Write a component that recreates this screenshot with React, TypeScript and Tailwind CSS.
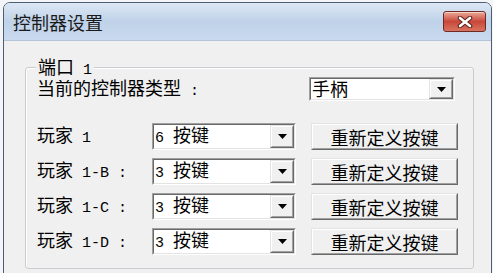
import React from 'react'

const cjk = "font-['Noto_Sans_CJK_SC','Noto_Sans',sans-serif] text-[18px] leading-[18px]"
const mono = "font-['Liberation_Mono','Noto_Sans_CJK_SC',monospace] text-[15px] leading-[18px]"

// SimSun-ish look: CJK at full width, ASCII at half width
function Mixed({ text }: { text: string }) {
  const parts = text.split(/([\x20-\x7e]+)/).filter(Boolean)
  return (
    <span className="whitespace-pre leading-[18px] text-black">
      {parts.map((p, i) =>
        /^[\x20-\x7e]+$/.test(p) ? (
          <span key={i} className={mono}>
            {p}
          </span>
        ) : (
          <span key={i} className={cjk}>
            {p}
          </span>
        ),
      )}
    </span>
  )
}

function Raised({ className = '', children }: { className?: string; children?: React.ReactNode }) {
  return (
    <div
      className={`border border-t-[#e3e3e3] border-l-[#e3e3e3] border-b-[#696969] border-r-[#696969] ${className}`}
    >
      <div className="flex h-full w-full items-center justify-center border border-t-white border-l-white border-b-[#a0a0a0] border-r-[#a0a0a0] bg-[#f0f0f0] leading-[18px]">
        {children}
      </div>
    </div>
  )
}

function Combo({ value, className = '' }: { value: string; className?: string }) {
  return (
    <div
      className={`border border-t-[#a0a0a0] border-l-[#a0a0a0] border-b-white border-r-white ${className}`}
    >
      <div className="flex h-full items-stretch border border-t-[#696969] border-l-[#696969] border-b-[#e3e3e3] border-r-[#e3e3e3] bg-white">
        <div className="flex flex-1 items-center pl-[1px] leading-[18px]">
          <Mixed text={value} />
        </div>
        <Raised className="w-[24px]">
          <svg width="9" height="5" viewBox="0 0 9 5">
            <path d="M0 0h9L4.5 5z" fill="#000" />
          </svg>
        </Raised>
      </div>
    </div>
  )
}

const players = [
  { label: '玩家 1', value: '6 按键' },
  { label: '玩家 1-B :', value: '3 按键' },
  { label: '玩家 1-C :', value: '3 按键' },
  { label: '玩家 1-D :', value: '3 按键' },
]

export default function App() {
  return (
    <div className="h-[273px] w-[493px] overflow-hidden bg-[#f3f5f8] pl-[3px] pt-[2px]">
      <div className="flex h-[276px] w-[489px] flex-col overflow-hidden rounded-t-[7px] border border-[#4f5d70] bg-[#f0f0f0]">
        {/* title bar */}
        <div className="flex h-[37px] shrink-0 items-center bg-gradient-to-b from-[#dce7f4] via-[#bfd2e9] to-[#c9daee] pl-[9px] pr-[5px]">
          <span className={`${cjk} text-[#1a1a1a]`}>控制器设置</span>
          <div className="ml-auto flex h-[21px] w-[43px] items-center justify-center rounded-[3px] border border-[#6e2a22] bg-gradient-to-b from-[#e9a99a] via-[#c8473a] to-[#d8735f] shadow-[inset_0_1px_0_rgba(255,255,255,0.5)]">
            <svg width="16" height="12" viewBox="0 0 16 12">
              <path d="M3 2l10 8M13 2L3 10" stroke="#5a1e18" strokeWidth="4.5" strokeLinecap="round" />
              <path d="M3 2l10 8M13 2L3 10" stroke="#fff" strokeWidth="2.6" strokeLinecap="round" />
            </svg>
          </div>
        </div>

        {/* client area */}
        <div className="flex-1 border-t border-[#b4c5da] pl-[21px] pt-[26px]">
          <div className="relative h-[202px] w-[449px] rounded-[3px] border border-[#c9cdd2] shadow-[inset_1px_1px_0_#fff]">
            <div className="absolute -top-[11px] left-[10px] bg-[#f0f0f0] px-[2px] leading-[18px]">
              <Mixed text="端口 1" />
            </div>

            <div className="flex items-center pl-[11px] pr-[18px] pt-[9px] leading-[18px]">
              <Mixed text="当前的控制器类型 :" />
              <Combo value="手柄" className="ml-auto h-[24px] w-[146px]" />
            </div>

            <div className="mt-[22px] grid grid-cols-[100px_144px_147px] gap-x-[15px] gap-y-[8px] pl-[11px]">
              {players.map((p) => (
                <React.Fragment key={p.label}>
                  <div className="flex items-center leading-[18px]">
                    <Mixed text={p.label} />
                  </div>
                  <Combo value={p.value} className="h-[27px]" />
                  <Raised className="h-[27px]">
                    <span className={cjk}>重新定义按键</span>
                  </Raised>
                </React.Fragment>
              ))}
            </div>
          </div>
        </div>
      </div>
    </div>
  )
}
